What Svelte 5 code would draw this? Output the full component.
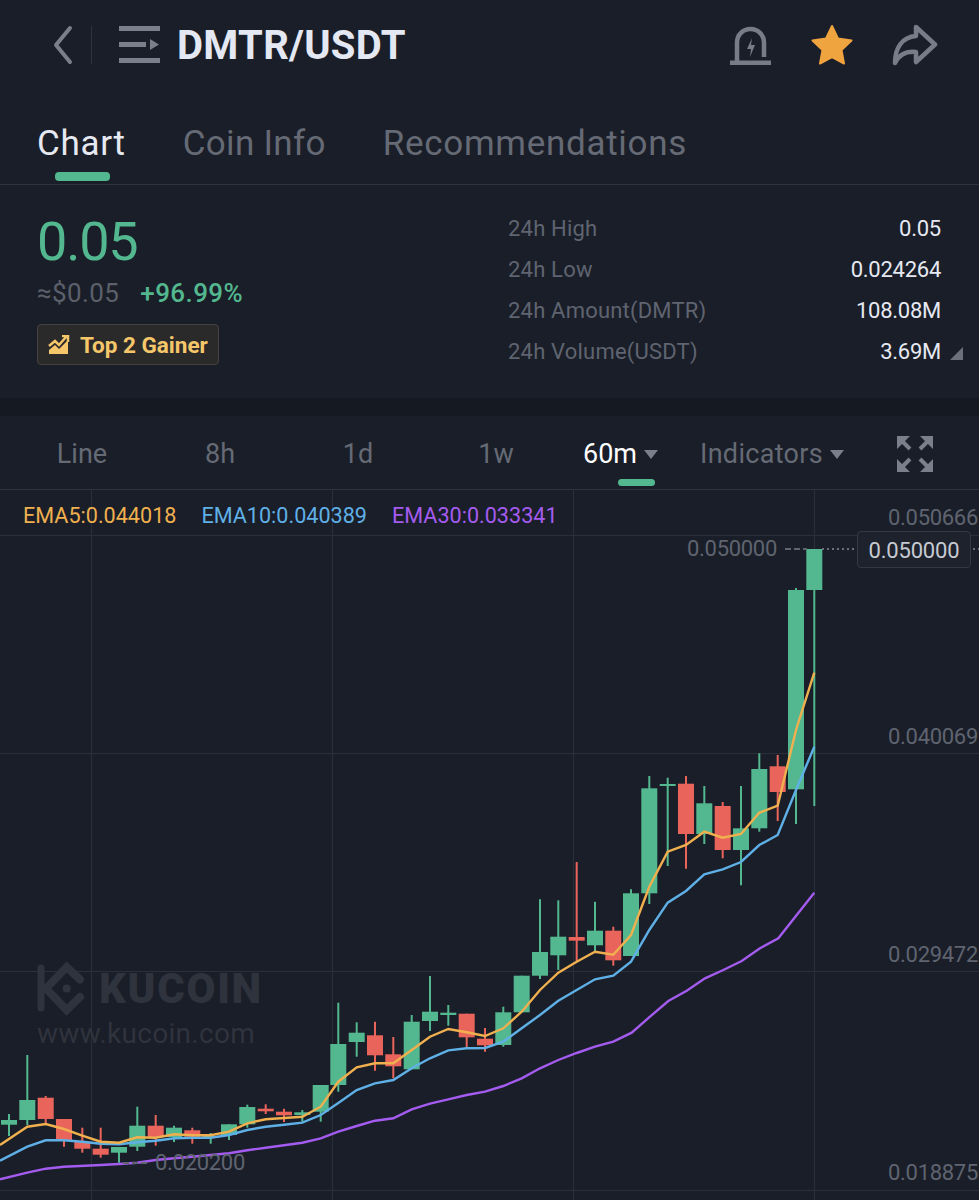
<script>
	const GREEN = '#53b88f';
	const RED = '#e9645b';

	// x, high, body top, body bottom, low, up?
	const candles = [
		[9, 1114, 1120, 1124.7, 1136, 1],
		[27.3, 1055, 1100, 1120, 1125, 1],
		[45.7, 1096, 1097.7, 1119, 1123, 0],
		[64, 1119, 1119, 1140, 1146.7, 0],
		[82.3, 1127.7, 1141.7, 1148.7, 1152.7, 0],
		[100.7, 1127.7, 1148.7, 1154.7, 1157.7, 0],
		[119, 1147, 1147, 1152.7, 1162.7, 1],
		[137.3, 1106.7, 1125.7, 1146.7, 1151, 1],
		[155.7, 1115, 1125.7, 1137, 1145.7, 0],
		[174, 1125.7, 1127.7, 1137, 1142, 1],
		[192.3, 1127.7, 1130.3, 1136.7, 1143.7, 0],
		[210.7, 1133, 1136, 1137, 1143.7, 1],
		[229, 1124.3, 1124.3, 1135, 1140, 1],
		[247.3, 1104.7, 1107, 1124.3, 1127.7, 1],
		[265.7, 1104.3, 1108.7, 1111.3, 1114, 0],
		[284, 1108.7, 1111.7, 1115.3, 1122, 0],
		[302.3, 1110, 1112.3, 1115, 1121.7, 1],
		[320.7, 1085, 1085, 1111.7, 1121.7, 1],
		[338.3, 1002.7, 1044, 1085, 1091.7, 1],
		[356.7, 1022.3, 1032.7, 1042, 1056.7, 1],
		[375, 1021.7, 1035.3, 1055.3, 1070.7, 0],
		[393.3, 1037, 1054.3, 1066.3, 1078.3, 0],
		[411.7, 1015, 1021.7, 1069.3, 1069.3, 1],
		[430, 976, 1011.7, 1021, 1031, 1],
		[448.3, 1005, 1012.7, 1015, 1025.7, 1],
		[466.7, 1013.7, 1013.7, 1037.3, 1047.3, 0],
		[485, 1028, 1038.7, 1045.3, 1051.7, 0],
		[503.3, 1006.7, 1012.3, 1045, 1046.7, 1],
		[521.7, 975.7, 975.7, 1012.3, 1012.3, 1],
		[540, 899.3, 952, 975.7, 979, 1],
		[558.3, 900.3, 936.7, 955.3, 970, 1],
		[576.7, 862, 937, 940.7, 961.7, 0],
		[595, 901.7, 930.7, 945.3, 951.7, 1],
		[613.3, 926.7, 930.7, 960.3, 965.7, 0],
		[631, 889.3, 893.3, 956, 956, 1],
		[649.3, 776, 788.3, 893.3, 904, 1],
		[667.7, 777.7, 784, 786, 866, 1],
		[686, 776, 783.7, 834, 868.7, 0],
		[704.3, 786, 803.3, 834, 844, 1],
		[722.7, 802, 806, 850, 858.3, 0],
		[741, 786, 828.3, 850, 885.3, 1],
		[759.3, 753.3, 769, 828.3, 831.7, 1],
		[777.7, 755, 766.3, 792, 821, 0],
		[796, 588, 590, 789.3, 824, 1],
		[814.3, 549, 549, 590, 806, 1]
	];

	const ema5 = '0,1145 27.3,1126.7 45.7,1124 64,1129 82.3,1135.7 100.7,1141.7 119,1142.7 137.3,1137.3 155.7,1137.7 174,1134.3 192.3,1135.3 210.7,1135.3 229,1131.7 247.3,1123.3 265.7,1119.3 284,1118 302.3,1116.7 320.7,1106.7 338.3,1081.7 356.7,1067.3 375,1063.3 393.3,1063.3 411.7,1050 430,1036.7 448.3,1029 466.7,1032.3 485,1036 503.3,1028.3 521.7,1011.7 540,990 558.3,972.7 576.7,961.7 595,951.7 613.3,954.7 631,935 649.3,886.7 667.7,851.7 686,845 704.3,831.7 722.7,837.7 741,834 759.3,812.7 777.7,805.7 796,730 814.3,672.7';
	const ema10 = '0,1160.7 27.3,1146.7 45.7,1140.3 64,1140.3 82.3,1141.7 100.7,1143.7 119,1144.3 137.3,1142.3 155.7,1140.7 174,1138.3 192.3,1137.7 210.7,1137.7 229,1135 247.3,1130 265.7,1126.7 284,1124.7 302.3,1122.7 320.7,1115 338.3,1103 356.7,1090 375,1083.3 393.3,1080 411.7,1068.3 430,1058.3 448.3,1050.3 466.7,1048.3 485,1048 503.3,1041.7 521.7,1028.3 540,1015 558.3,1000.7 576.7,990 595,979.3 613.3,975.7 631,961.7 649.3,930 667.7,902.7 686,891 704.3,874.3 722.7,869.3 741,862 759.3,845 777.7,835 796,790 814.3,746.7';
	const ema30 = '0,1179.3 27.3,1172.7 45.7,1168.7 64,1166.7 100.7,1165 119,1164 137.3,1162.7 155.7,1160 174,1158.3 192.3,1156.7 210.7,1155 229,1153.3 247.3,1150.3 265.7,1147.7 284,1145.3 302.3,1142.7 320.7,1138.3 338.3,1131.7 356.7,1126 375,1120.7 393.3,1118.3 411.7,1109.3 430,1103.7 448.3,1099.3 466.7,1095 485,1091.7 503.3,1086 521.7,1078.3 540,1068.3 558.3,1060 576.7,1053 595,1046.7 613.3,1041.7 631.7,1032.7 650,1016.7 668.3,1001 686.7,990.7 705,978.3 723.3,970 741.7,961 760,948.3 778.3,938.3 796.7,915 814.3,892.7';

	const stats = [
		['24h High', '0.05'],
		['24h Low', '0.024264'],
		['24h Amount(DMTR)', '108.08M'],
		['24h Volume(USDT)', '3.69M']
	];
	const ranges = ['Line', '8h', '1d', '1w'];
	const gridX = [91.5, 332.5, 573.5, 814.5];
	const gridY = [535.5, 753.5, 971.5, 1190.5];
	const axis = [
		['0.050666', 525],
		['0.040069', 744],
		['0.029472', 962],
		['0.018875', 1180]
	];
</script>

<div class="screen">
	<header class="topbar">
		<svg class="back" width="20" height="40" viewBox="0 0 20 40"><path d="M17 3 3 20l14 17" fill="none" stroke="#7a7f8b" stroke-width="4" stroke-linecap="round" stroke-linejoin="round"/></svg>
		<span class="divider"></span>
		<svg class="menu" width="42" height="38" viewBox="0 0 42 38"><path d="M0 0h41v5H0zM0 16h27v5H0zM0 32h41v5H0zM31 13l9 5.500-9 5.500z" fill="#7a7f8b"/></svg>
		<h1>DMTR/USDT</h1>
		<div class="actions">
			<svg width="42" height="40" viewBox="0 0 42 40"><path d="M0 38h41" stroke="#767c88" stroke-width="5"/><path d="M7 36V17.500a13.500 13.500 0 0 1 27 0V32" fill="none" stroke="#767c88" stroke-width="4.500"/><path d="M22 13l-5 11h4l-1 8 5-12h-4z" fill="#767c88"/></svg>
			<svg width="44" height="42" viewBox="0 0 44 42"><path d="M22 2l6 12.500 13.500 2-10 9.500 2.500 13.500-12-6.500-12 6.500L12.500 26l-10-9.500 13.500-2z" fill="#f0a440" stroke="#f0a440" stroke-width="2" stroke-linejoin="round"/></svg>
			<svg width="46" height="42" viewBox="0 0 46 42"><path d="M24 3l19 17.500L24 38V28C14 27 7 31 3 39 3 24 10 13 24 12z" fill="none" stroke="#767c88" stroke-width="4.500" stroke-linejoin="round"/></svg>
		</div>
	</header>

	<nav class="tabs">
		<span class="tab active">Chart</span>
		<span class="tab">Coin Info</span>
		<span class="tab">Recommendations</span>
	</nav>

	<section class="summary">
		<div class="price">
			<div class="last">0.05</div>
			<div class="sub"><span class="fiat">≈$0.05</span><span class="change">+96.99%</span></div>
			<div class="badge">
				<svg width="22" height="20" viewBox="0 0 22 20"><path d="M1 11l6-5 4 4 7-8M14 1h6v6" fill="none" stroke="#f6c76a" stroke-width="2.500"/><path d="M1 19v-4l6-5 4 4 9-9v14z" fill="#f6c76a"/></svg>
				Top 2 Gainer
			</div>
		</div>
		<dl class="stats">
			{#each stats as [label, value]}
				<div class="row"><dt>{label}</dt><dd>{value}</dd></div>
			{/each}
			<span class="corner"></span>
		</dl>
	</section>

	<div class="band"></div>

	<div class="toolbar">
		{#each ranges as r}
			<span class="range">{r}</span>
		{/each}
		<span class="range current">60m<i class="caret"></i></span>
		<span class="range wide">Indicators<i class="caret"></i></span>
		<svg class="expand" width="38" height="38" viewBox="0 0 38 38">
			<path d="M1 1h13L1 14zM37 1H24l13 13zM1 37h13L1 24zM37 37H24l13-13z" fill="#7a7f8b"/>
			<path d="M5 5l9 9M33 5l-9 9M5 33l9-9M33 33l-9-9" stroke="#7a7f8b" stroke-width="4"/>
		</svg>
	</div>

	<div class="chart">
		<svg width="979" height="710" viewBox="0 490 979 710">
			{#each gridX as x}<line x1={x} x2={x} y1="490" y2="1200" class="grid"/>{/each}
			{#each gridY as y}<line x1="0" x2="979" y1={y} y2={y} class="grid"/>{/each}

			<g class="mark">
				<path d="M41 968v40" stroke="#2f333d" stroke-width="7" stroke-linecap="round"/>
				<path d="M80 979.500 66.700 967 46 988.500 66.700 1010 80 997" fill="none" stroke="#2f333d" stroke-width="8" stroke-linecap="round"/>
				<circle cx="66.700" cy="988.500" r="4" fill="#2f333d"/>
				<text x="99" y="1003" class="brand">KUCOIN</text>
				<text x="37" y="1043" class="site">www.kucoin.com</text>
			</g>

			{#each candles as [x, hi, top, bot, lo, up]}
				<line x1={x} x2={x} y1={hi} y2={lo} stroke={up ? GREEN : RED} stroke-width="2"/>
				<rect x={x - 8} y={top} width="16" height={Math.max(bot - top, 2)} fill={up ? GREEN : RED}/>
			{/each}

			<polyline points={ema30} class="ema" stroke="#a45cf0"/>
			<polyline points={ema10} class="ema" stroke="#5fb0e6"/>
			<polyline points={ema5} class="ema" stroke="#f0b04f"/>

			<line x1="123" x2="148" y1="1163" y2="1163" class="dash"/>
			<text x="155" y="1170" class="label">0.020200</text>
			<text x="687" y="556" class="label">0.050000</text>
			<line x1="785" x2="807" y1="549" y2="549" class="dash"/>
			<line x1="822" x2="858" y1="549" y2="549" class="dots"/>
			<line x1="958" x2="979" y1="549" y2="549" class="dots"/>

			{#each axis as [v, y]}
				<text x="888" y={y} class="label">{v}</text>
			{/each}
		</svg>
		<div class="legend">
			<span class="e5">EMA5:0.044018</span>
			<span class="e10">EMA10:0.040389</span>
			<span class="e30">EMA30:0.033341</span>
		</div>
		<div class="tag">0.050000</div>
	</div>
</div>

<style>
	:global(body) {
		background: #1a1e28;
	}

	.screen {
		width: 979px;
		height: 1200px;
		overflow: hidden;
		background: #1a1e28;
		font-family: Roboto, "Liberation Sans", sans-serif;
		color: #e6e9f2;
	}

	.topbar {
		display: flex;
		align-items: center;
		height: 90px;
		padding-left: 53px;
		box-sizing: border-box;
	}

	.divider {
		width: 1px;
		height: 38px;
		background: #2f333d;
		margin-left: 18px;
		margin-right: 26px;
	}

	.menu {
		margin-left: 1px;
	}

	h1 {
		margin: 0 0 0 16px;
		font-size: 40px;
		font-weight: 700;
		letter-spacing: 0.3px;
		color: #e4e8f3;
	}

	.actions {
		margin-left: auto;
		margin-right: 41px;
		display: flex;
		align-items: center;
		gap: 38px;
	}

	.tabs {
		display: flex;
		gap: 57px;
		height: 95px;
		padding-left: 37px;
		padding-top: 32px;
		box-sizing: border-box;
		border-bottom: 1px solid #2f333d;
		font-size: 35px;
		letter-spacing: 0.7px;
	}

	.tab {
		position: relative;
		color: #656a75;
		line-height: 44px;
	}

	.tab:nth-child(2) {
		letter-spacing: 0.3px;
	}

	.tab.active {
		color: #e6e9f2;
	}

	.tab.active::after {
		content: '';
		position: absolute;
		left: 18px;
		top: 50px;
		width: 55px;
		height: 9px;
		border-radius: 4px;
		background: #53b88f;
	}

	.summary {
		display: flex;
		justify-content: space-between;
		height: 213px;
		padding: 0 38px 0 37px;
		box-sizing: border-box;
	}

	.last {
		margin-top: 27px;
		font-size: 54px;
		line-height: 60px;
		letter-spacing: -1.2px;
		color: #53b88f;
	}

	.sub {
		display: flex;
		gap: 21px;
		margin-top: 5px;
		font-size: 26px;
		line-height: 32px;
		letter-spacing: 0.4px;
	}

	.fiat {
		color: #5b606b;
	}

	.change {
		color: #53b88f;
		font-weight: 500;
	}

	.badge {
		display: flex;
		align-items: center;
		gap: 10px;
		width: 182px;
		height: 41px;
		margin-top: 15px;
		padding-left: 10px;
		box-sizing: border-box;
		background: #2b2a2b;
		border: 1px solid #45433f;
		border-radius: 4px;
		color: #f6c76a;
		font-size: 22.5px;
		font-weight: 700;
	}

	.stats {
		position: relative;
		margin: 23px 0 0;
		width: 433px;
		font-size: 22px;
		line-height: 41px;
	}

	.row {
		display: flex;
		justify-content: space-between;
	}

	dt {
		color: #5f6470;
		letter-spacing: 0.2px;
	}

	dd {
		margin: 0;
		color: #e6e9f2;
		letter-spacing: -0.25px;
	}

	.corner {
		position: absolute;
		right: -22px;
		top: 139px;
		border-left: 13px solid transparent;
		border-bottom: 13px solid #6b707b;
	}

	.band {
		height: 18px;
		background: #151921;
	}

	.toolbar {
		display: grid;
		grid-template-columns: repeat(4, 138px) 120px 170px 1fr;
		align-items: center;
		height: 74px;
		padding-left: 13px;
		padding-top: 3px;
		box-sizing: border-box;
		font-size: 27px;
		color: #656a75;
		border-bottom: 1px solid #2f333d;
	}

	.range {
		position: relative;
		text-align: center;
	}

	.current {
		color: #fff;
		text-align: left;
		padding-left: 18px;
	}

	.current::after {
		content: '';
		position: absolute;
		left: 53px;
		top: 41px;
		width: 37px;
		height: 7px;
		border-radius: 4px;
		background: #53b88f;
	}

	.wide {
		text-align: left;
		padding-left: 15px;
		letter-spacing: 0.3px;
	}

	.caret {
		display: inline-block;
		margin-left: 7px;
		vertical-align: 4px;
		border: 7px solid transparent;
		border-bottom: 0;
		border-top: 9px solid #7a7f8b;
	}

	.expand {
		margin-left: 41px;
	}

	.chart {
		position: relative;
		height: 710px;
	}

	.chart svg {
		display: block;
	}

	.grid {
		stroke: #2b2f3a;
		stroke-width: 1;
	}

	.ema {
		fill: none;
		stroke-width: 2.4;
	}

	.dots {
		stroke: #6b707b;
		stroke-width: 2;
		stroke-dasharray: 2 3;
	}

	.dash {
		stroke: #5f6470;
		stroke-width: 2;
		stroke-dasharray: 6 3;
	}

	.label {
		fill: #5f6470;
		font-size: 22px;
		letter-spacing: -0.3px;
	}

	.brand {
		fill: #2f333d;
		font-size: 42px;
		font-weight: 900;
		letter-spacing: 1.7px;
	}

	.site {
		fill: #2f333d;
		font-size: 28px;
		letter-spacing: 0.3px;
	}

	.legend {
		position: absolute;
		left: 23px;
		top: 12px;
		display: flex;
		gap: 25px;
		font-size: 21.6px;
		line-height: 28px;
	}

	.e5 { color: #f0b04f; }
	.e10 { color: #5fb0e6; }
	.e30 { color: #a45cf0; }

	.tag {
		position: absolute;
		left: 857px;
		top: 41px;
		width: 114px;
		height: 37px;
		line-height: 37px;
		box-sizing: border-box;
		text-align: center;
		border: 1px solid #343843;
		border-radius: 4px;
		background: #1e222c;
		color: #c6cad3;
		font-size: 22px;
		letter-spacing: -0.2px;
	}
</style>
